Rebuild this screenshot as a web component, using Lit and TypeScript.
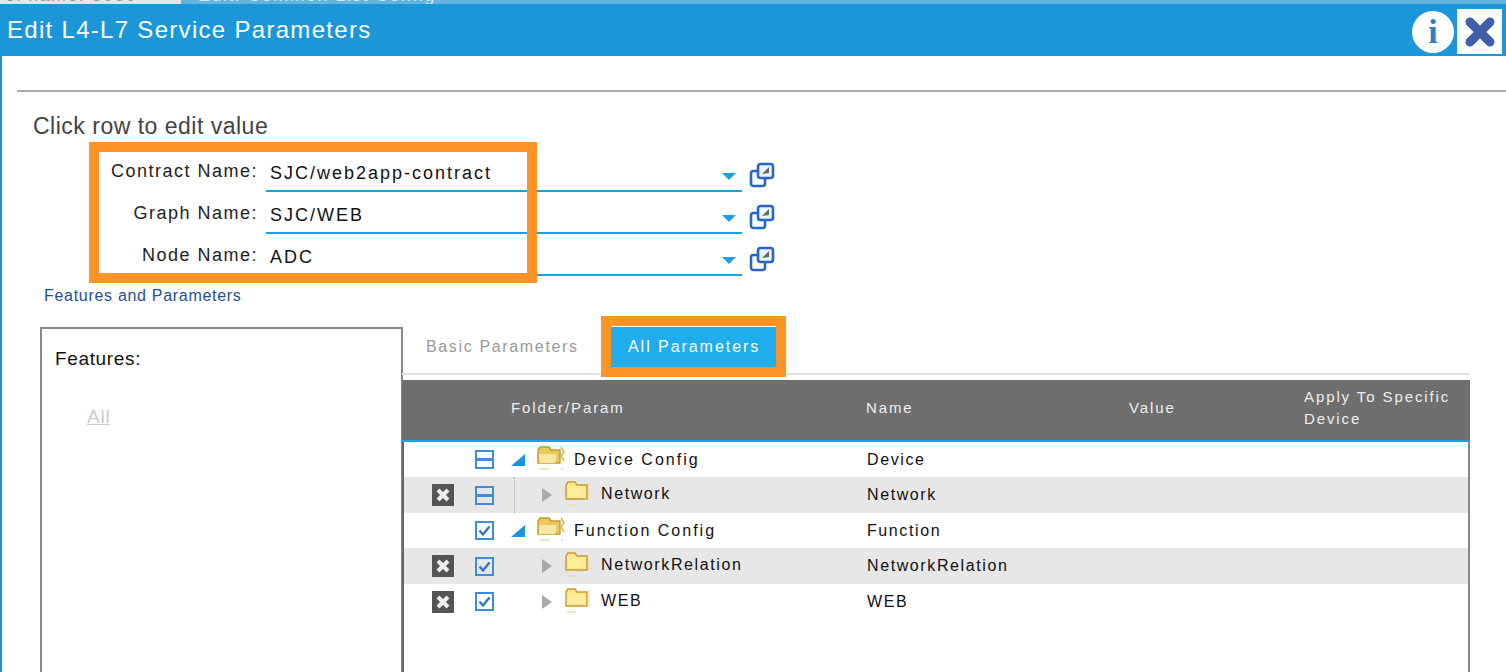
import { LitElement, html, css, svg } from 'lit';
import { customElement } from 'lit/decorators.js';

const field = (label: string, value: string) => html`
    <div class="field">
        <label>${label}</label>
        <div class="select">
            <span>${value}</span>
            <i class="caret"></i>
        </div>
        <svg class="popout" width="26" height="26" viewBox="0 0 26 26" fill="none" stroke="#2566c8" stroke-width="2.6">
            <rect x="2" y="9" width="14" height="15" rx="2.5" />
            <rect x="9" y="2" width="15" height="14" rx="2.5" fill="#eef4fc" />
            <path d="M13 12L20 5v6z" fill="#666" stroke="none" />
        </svg>
    </div>
`;

const folder = (open: boolean) => html`
    <svg class="folder ${open ? 'open' : ''}" viewBox="0 0 ${open ? 29 : 26} 26">
        ${open
            ? svg`<path d="M2 5l2-3h9l2 3h9v13H2z" fill="#e9c95e" stroke="#c79a2e" stroke-width="1.4" />
                  <path d="M3 9h18l-2 9H3z" fill="#f7e7a4" />
                  <path d="M25 2l3 5-3 4 3 5" fill="none" stroke="#dcb856" stroke-width="1.6" />
                  <path d="M4 24h9M25 24h2" stroke="#ecd9a8" stroke-width="1.4" />`
            : svg`<path d="M2 5l2-3h7l2 3h10v14H2z" fill="#ffe88e" stroke="#c79a2e" stroke-width="1.4" />
                  <path d="M4 8h17v9H4z" fill="#ffec9c" />
                  <path d="M25 2v18" stroke="#f0dfa8" stroke-width="1.2" />
                  <path d="M3 25h9" stroke="#ecd9a8" stroke-width="1.4" />`}
    </svg>
`;

type Row = {
    name: string;
    param: string;
    level: 0 | 1;
    mark: 'minus' | 'check';
    remove: boolean;
    guide?: boolean;
};

const rows: Row[] = [
    { name: 'Device Config', param: 'Device', level: 0, mark: 'minus', remove: false },
    { name: 'Network', param: 'Network', level: 1, mark: 'minus', remove: true, guide: true },
    { name: 'Function Config', param: 'Function', level: 0, mark: 'check', remove: false },
    { name: 'NetworkRelation', param: 'NetworkRelation', level: 1, mark: 'check', remove: true },
    { name: 'WEB', param: 'WEB', level: 1, mark: 'check', remove: true },
];

@customElement('app-root')
export class AppRoot extends LitElement {
    static styles = css`
        :host {
            display: block;
            width: 1506px;
            height: 672px;
            overflow: hidden;
            background: #fff;
            font-family: 'Liberation Sans', Arial, sans-serif;
            color: #222;
        }

        * {
            box-sizing: border-box;
        }

        .strip {
            display: flex;
            height: 4px;
            overflow: hidden;
            background: #62b5db;
            font-size: 18px;
            line-height: 18px;
            white-space: nowrap;
        }

        .strip div {
            width: 181px;
            padding-left: 5px;
            background: #e6e6e6;
            color: #999;
        }

        .strip span {
            display: block;
            margin-top: -14px;
            letter-spacing: 1.4px;
        }

        .strip .crumb {
            padding-left: 17px;
            color: #cfe9f6;
        }

        header {
            display: flex;
            align-items: center;
            height: 52px;
            padding: 3px 4px 0 7px;
            background: #1a96d9;
            color: #fff;
        }

        header h1 {
            flex: 1;
            margin: -3px 0 0;
            font-size: 24px;
            font-weight: 400;
            letter-spacing: 1.3px;
        }

        .info {
            display: flex;
            align-items: center;
            justify-content: center;
            width: 42px;
            height: 42px;
            margin-right: 3px;
            border-radius: 50%;
            background: #fff;
            color: #2e7fc9;
            font-family: 'Liberation Serif', serif;
            font-size: 34px;
            font-weight: 700;
        }

        .close {
            display: flex;
            align-items: center;
            justify-content: center;
            width: 45px;
            height: 45px;
            background: #fff;
        }

        main {
            height: 616px;
            padding: 34px 0 0 15px;
            border-left: 2px solid #1a96d9;
        }

        hr {
            height: 2px;
            margin: 0;
            border: 0;
            background: #aaa;
        }

        .hint {
            height: 28px;
            margin: 20px 0 0 16px;
            font-size: 23px;
            letter-spacing: 0.5px;
            line-height: 28px;
            color: #444;
        }

        .form {
            display: flex;
            flex-direction: column;
            gap: 14px;
            margin-top: 24px;
        }

        .form-wrap {
            position: relative;
        }

        .highlight {
            position: absolute;
            border: 10px solid #ff9326;
            pointer-events: none;
        }

        .highlight.fields {
            left: 72px;
            top: -22px;
            width: 448px;
            height: 141px;
        }

        .field {
            display: flex;
            height: 28px;
            align-items: flex-end;
        }

        .field label {
            width: 241px;
            padding-bottom: 11px;
            text-align: right;
            font-size: 18px;
            letter-spacing: 1.5px;
            line-height: 20px;
            color: #222;
        }

        .select {
            position: relative;
            display: flex;
            align-items: flex-end;
            width: 476px;
            height: 28px;
            margin-left: 8px;
            padding: 0 0 7px 4px;
            border-bottom: 2px solid #1aa3e4;
            font-size: 18px;
            letter-spacing: 2px;
            line-height: 20px;
            color: #111;
        }

        .caret {
            position: absolute;
            right: 6px;
            bottom: 10px;
            border: 7px solid transparent;
            border-top: 7px solid #1f9fe0;
            border-bottom: 0;
        }

        .popout {
            margin: 0 0 4px 7px;
        }

        .section {
            height: 20px;
            margin: 10px 0 0 27px;
            font-size: 16px;
            line-height: 20px;
            letter-spacing: 0.7px;
            color: #1f4f96;
        }

        .split {
            display: flex;
            margin: 21px 0 0 23px;
        }

        .features {
            width: 363px;
            height: 360px;
            padding: 18px 13px;
            border: 2px solid #888;
        }

        .features h3 {
            margin: 0;
            font-size: 19px;
            font-weight: 400;
            letter-spacing: 0.65px;
            line-height: 24px;
            color: #111;
        }

        .features a {
            display: inline-block;
            margin: 35px 0 0 32px;
            font-size: 19px;
            letter-spacing: 0.8px;
            line-height: 22px;
            color: #ccc;
            text-decoration: underline;
        }

        .params {
            position: relative;
            width: 1068px;
            margin-left: -1px;
        }

        .tabs {
            display: flex;
            align-items: center;
            height: 48px;
            border-bottom: 2px solid #e2e2e2;
            font-size: 16px;
            white-space: nowrap;
        }

        .tab {
            display: flex;
            align-items: center;
            height: 41px;
            margin-top: -6px;
            padding: 0 17px;
            color: #999;
        }

        .tab.first {
            width: 209px;
            padding: 0 0 0 24px;
            letter-spacing: 1.65px;
        }

        .tab.active {
            width: 165px;
            background: #1fadee;
            color: #fff;
            letter-spacing: 1.95px;
        }

        .highlight.tab-box {
            left: 199px;
            top: -11px;
            width: 185px;
            height: 61px;
        }

        .table {
            height: 320px;
            margin-top: 5px;
            border-left: 2px solid #666;
            border-right: 2px solid #888;
        }

        .head {
            display: grid;
            grid-template-columns: 355px 263px 175px 1fr;
            align-items: center;
            height: 62px;
            margin-left: -2px;
            margin-right: -2px;
            padding: 0 0 4px 109px;
            background: #6e6e6e;
            border-bottom: 2px solid #1aa3e4;
            color: #eee;
            font-size: 15px;
            letter-spacing: 1.9px;
            line-height: 22px;
            font-weight: 400;
        }

        .row {
            display: flex;
            align-items: center;
            height: 35px;
            font-size: 16px;
            letter-spacing: 1.6px;
            color: #111;
        }

        .row:nth-child(even) {
            height: 36px;
            background: #e7e7e7;
        }

        .remove {
            flex: none;
            width: 24px;
            height: 24px;
            margin-left: 27px;
        }

        .remove.none {
            visibility: hidden;
        }

        .mark {
            flex: none;
            width: 19px;
            height: 19px;
            margin-left: 20px;
        }

        .tree {
            position: relative;
            display: flex;
            align-items: center;
            flex: none;
            width: 373px;
            height: 100%;
        }

        .tree.guide::before {
            content: '';
            position: absolute;
            left: 20px;
            top: 0;
            bottom: 0;
            border-left: 1px dotted #aaa;
        }

        .tree.level-0 {
            padding-left: 17px;
            letter-spacing: 2px;
        }

        .tree.level-1 {
            padding-left: 47px;
        }

        .tree.level-1 .name {
            margin-bottom: 2px;
        }

        .arrow {
            flex: none;
            margin-right: 11px;
        }

        .folder {
            flex: none;
            width: 26px;
            height: 26px;
            margin: -4px 11px 0 0;
        }

        .folder.open {
            width: 29px;
            margin-right: 9px;
        }
    `;

    private renderRow(row: Row) {
        const open = row.level === 0;
        return html`
            <div class="row">
                <svg class="remove ${row.remove ? '' : 'none'}" viewBox="0 0 24 24">
                    <rect x="1" y="1" width="22" height="22" fill="#555" />
                    <path d="M7 7l10 10M17 7L7 17" stroke="#eee" stroke-width="4" />
                </svg>
                <svg class="mark" viewBox="0 0 19 19" fill="none" stroke="#3a8de0" stroke-width="2">
                    <rect x="1" y="1" width="17" height="17" />
                    ${row.mark === 'minus'
                        ? svg`<path d="M1 9.5h17" stroke-width="3" />`
                        : svg`<path d="M4.5 9.5l3.5 4 6.5-8" stroke="#2f75c9" stroke-width="2.4" />`}
                </svg>
                <div class="tree level-${row.level} ${row.guide ? 'guide' : ''}">
                    ${open
                        ? html`<svg class="arrow" width="14" height="12" viewBox="0 0 14 12"><path d="M0 12L14 0v12z" fill="#1a95dc" /></svg>`
                        : html`<svg class="arrow" width="12" height="14" viewBox="0 0 12 14"><path d="M1 0l10 7-10 7z" fill="#aaa" /></svg>`}
                    ${folder(open)}
                    <span class="name">${row.name}</span>
                </div>
                <span class="value">${row.param}</span>
            </div>
        `;
    }

    render() {
        return html`
            <div class="strip">
                <div><span>ol name: 8080</span></div>
                <span class="crumb">Edit: Common List Config</span>
            </div>
            <header>
                <h1>Edit L4-L7 Service Parameters</h1>
                <div class="info">i</div>
                <div class="close">
                    <svg width="32" height="32" viewBox="0 0 32 32">
                        <path d="M6 6l20 20M26 6L6 26" stroke="#3f5fa8" stroke-width="9" stroke-linecap="round" />
                    </svg>
                </div>
            </header>
            <main>
                <hr />
                <div class="hint">Click row to edit value</div>
                <div class="form-wrap">
                    <div class="form">
                        ${field('Contract Name:', 'SJC/web2app-contract')}
                        ${field('Graph Name:', 'SJC/WEB')}
                        ${field('Node Name:', 'ADC')}
                    </div>
                    <div class="highlight fields"></div>
                </div>
                <div class="section">Features and Parameters</div>
                <div class="split">
                    <aside class="features">
                        <h3>Features:</h3>
                        <a>All</a>
                    </aside>
                    <section class="params">
                        <div class="tabs">
                            <div class="tab first">Basic Parameters</div>
                            <div class="tab active">All Parameters</div>
                        </div>
                        <div class="highlight tab-box"></div>
                        <div class="table">
                            <div class="head">
                                <span>Folder/Param</span>
                                <span>Name</span>
                                <span>Value</span>
                                <span>Apply To Specific Device</span>
                            </div>
                            <div>${rows.map((row) => this.renderRow(row))}</div>
                        </div>
                    </section>
                </div>
            </main>
        `;
    }
}
